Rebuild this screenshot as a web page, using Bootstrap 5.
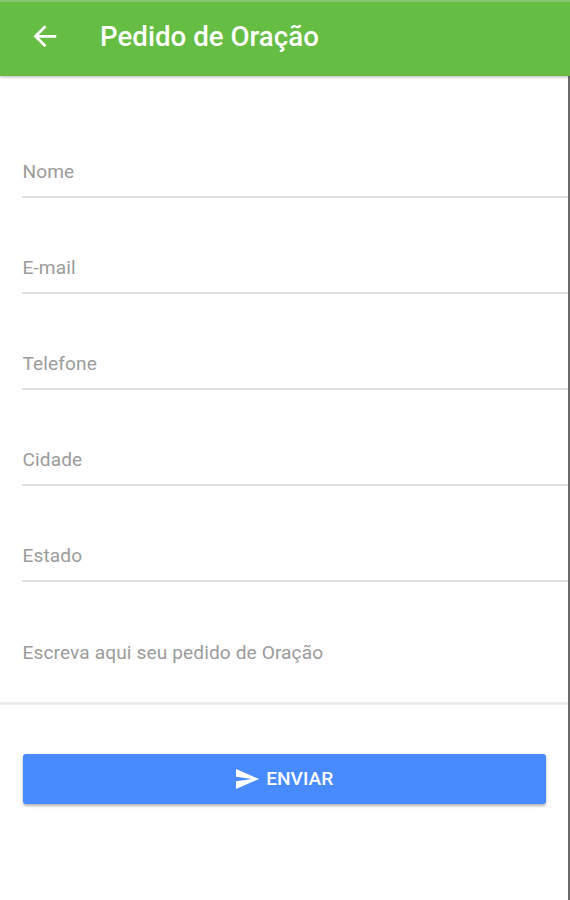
<!DOCTYPE html>
<html lang="pt-BR">
<head>
<meta charset="utf-8">
<meta name="viewport" content="width=device-width, initial-scale=1">
<title>Pedido de Oração</title>
<link href="https://cdn.jsdelivr.net/npm/bootstrap@5.3.0/dist/css/bootstrap.min.css" rel="stylesheet">
<style>
body{font-family:Roboto,sans-serif;color:#999;background:#fff}
.screen{height:900px;border-right:2px solid #6a6a6a}
.topbar{position:relative;height:76px;background:#65bd43;border-top:2px solid #84c772;margin-right:-2px;padding:0 0 4px 32px;box-shadow:0 1px 3px rgba(0,0,0,.3)}
.topbar h1{font-size:27.7px;font-weight:500;line-height:32px;margin-left:42px}
.fields{padding:26px 0 0 22px}
.line-input{height:96.1px;border:0;border-bottom:2px solid #e0e0e0;border-radius:0;padding:45px 0 0 .5px;font-size:19.1px;letter-spacing:.12px;background:none}
.line-input::placeholder{color:#9b9b9b;opacity:1}
.message-box{height:123px;border-bottom:3px solid #ececec}
.message-box textarea{height:120px;padding:57px 0 0 22.5px;border:0;resize:none;line-height:28px}
.send{margin:49px 22px 0 23px;height:50px;background:#488aff;border-radius:3px;font-size:19.2px;font-weight:500;box-shadow:0 2px 3px rgba(0,0,0,.3)}
.send svg{margin-right:7.5px}
</style>
</head>
<body>
<main class="screen d-flex flex-column">
<header class="topbar d-flex align-items-center text-white flex-shrink-0">
<svg width="26" height="26" viewBox="0 0 26 26" fill="none" stroke="#fff" stroke-width="2.8"><path d="M24.3 12.3H4.5M13.5 2.3 3.5 12.3l10 10"/></svg>
<h1 class="mb-0">Pedido de Oração</h1>
</header>
<form>
<div class="fields">
<input class="form-control line-input" placeholder="Nome" aria-label="Nome">
<input class="form-control line-input" placeholder="E-mail" aria-label="E-mail">
<input class="form-control line-input" placeholder="Telefone" aria-label="Telefone">
<input class="form-control line-input" placeholder="Cidade" aria-label="Cidade">
<input class="form-control line-input" placeholder="Estado" aria-label="Estado">
</div>
<div class="message-box"><textarea class="form-control line-input" placeholder="Escreva aqui seu pedido de Oração" aria-label="Pedido"></textarea></div>
<div class="d-flex"><button type="button" class="btn send text-white flex-fill d-flex align-items-center justify-content-center p-0"><svg width="23" height="20" viewBox="0 0 23 20" fill="#fff"><path d="M0 0 23 10 0 20V12.3L16 10 0 7.7Z"/></svg>ENVIAR</button></div>
</form>
</main>
<script src="https://cdn.jsdelivr.net/npm/bootstrap@5.3.0/dist/js/bootstrap.bundle.min.js"></script>
</body>
</html>
